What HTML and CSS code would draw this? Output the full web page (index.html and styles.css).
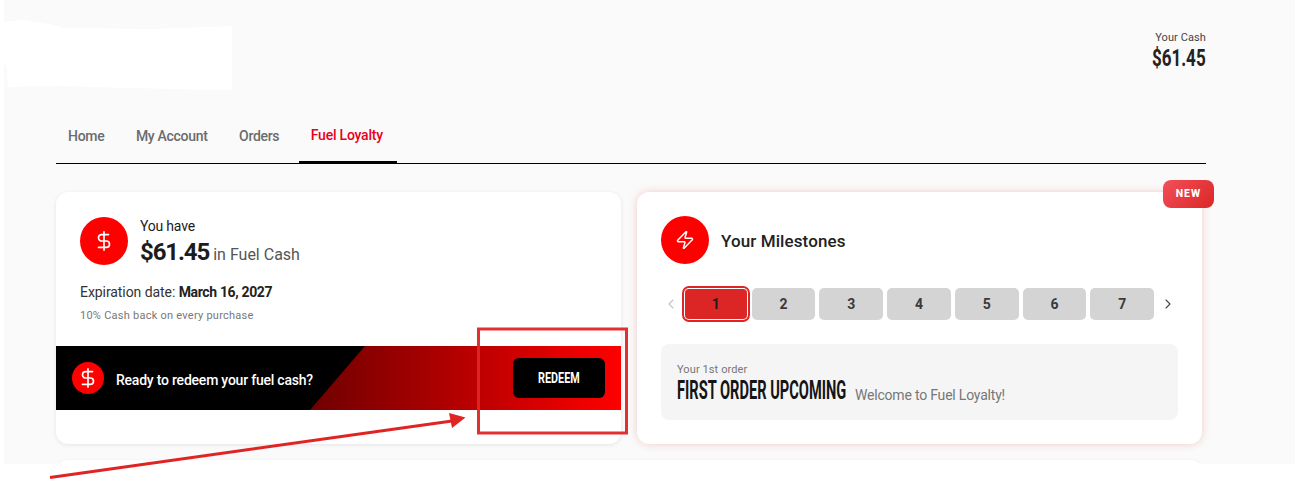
FILE: index.html
```html
<!DOCTYPE html>
<html lang="en">
<head>
<meta charset="utf-8">
<title>Fuel Loyalty</title>
<link rel="stylesheet" href="styles.css">
</head>
<body>
<div class="page">
  <header class="top">
    <svg class="logo-mask" width="228" height="70" viewBox="0 0 228 70"><path fill="#fff" d="M0 2 L20 0 L45 4 L60 8 L150 9 L228 6 L228 50 L229 58 L227 70 L120 68 L60 66 L4 67 L3 50 L0 40 Z"/></svg>
    <div class="cash">
      <div class="cash-label">Your Cash</div>
      <div class="cash-value">$61.45</div>
    </div>
  </header>
  <nav class="tabs">
    <a class="tab">Home</a>
    <a class="tab">My Account</a>
    <a class="tab">Orders</a>
    <a class="tab tab-active">Fuel Loyalty</a>
  </nav>
  <main class="cards">
    <section class="card card-cash">
      <div class="cash-head">
        <span class="circle">
          <svg width="22" height="22" viewBox="0 0 24 24" class="ico"><path d="M12 2v20M17 5H9.500a3.500 3.500 0 0 0 0 7h5a3.500 3.500 0 0 1 0 7H6"/></svg>
        </span>
        <div>
          <div class="you-have">You have</div>
          <div class="balance"><strong>$61.45</strong> in Fuel Cash</div>
        </div>
      </div>
      <p class="expiry">Expiration date: <strong>March 16, 2027</strong></p>
      <p class="back">10% Cash back on every purchase</p>
      <div class="banner">
        <span class="circle circle-sm">
          <svg width="22" height="22" viewBox="0 0 24 24" class="ico"><path d="M12 2v20M17 5H9.500a3.500 3.500 0 0 0 0 7h5a3.500 3.500 0 0 1 0 7H6"/></svg>
        </span>
        <span class="banner-text">Ready to redeem your fuel cash?</span>
        <button class="redeem"><span class="redeem-text">REDEEM</span></button>
      </div>
    </section>
    <section class="card card-miles">
      <span class="badge">NEW</span>
      <div class="miles-head">
        <span class="circle">
          <svg width="20" height="20" viewBox="0 0 24 24" class="ico"><path d="M4 14a1 1 0 0 1-.78-1.630l9.900-10.200a.5.5 0 0 1 .86.46l-1.920 6.020A1 1 0 0 0 13 10h7a1 1 0 0 1 .78 1.630l-9.900 10.200a.5.5 0 0 1-.86-.46l1.920-6.020A1 1 0 0 0 11 14z"/></svg>
        </span>
        <h2 class="miles-title">Your Milestones</h2>
      </div>
      <div class="stepper">
        <svg class="chev chev-off" width="16" height="16" viewBox="0 0 24 24"><path d="M15 18l-6-6 6-6"/></svg>
        <div class="steps">
          <span class="step step-on">1</span>
          <span class="step">2</span>
          <span class="step">3</span>
          <span class="step">4</span>
          <span class="step">5</span>
          <span class="step">6</span>
          <span class="step">7</span>
        </div>
        <svg class="chev" width="16" height="16" viewBox="0 0 24 24"><path d="M9 18l6-6-6-6"/></svg>
      </div>
      <div class="order">
        <div class="order-small">Your 1st order</div>
        <div class="order-line"><span class="order-big">FIRST ORDER UPCOMING</span><span class="order-msg">Welcome to Fuel Loyalty!</span></div>
      </div>
    </section>
  </main>
  <div class="card card-next"></div>
</div>
<svg class="marks" width="1295" height="480" viewBox="0 0 1295 480">
  <rect x="478.500" y="329" width="148" height="104" fill="none" stroke="#e02424" stroke-width="3" opacity=".95"/>
  <path d="M50 477.500 L452 421" fill="none" stroke="#e02424" stroke-width="3"/>
  <path d="M465.500 417.500 L449 413 L452 428 Z" fill="#e02424"/>
</svg>
</body>
</html>
```
FILE: styles.css
```css
* { box-sizing: border-box; }
html, body { margin: 0; padding: 0; background: #fff; }
body {
  font-family: Roboto, "Liberation Sans", sans-serif;
  color: #1c1c1c;
  width: 1295px;
  height: 480px;
  overflow: hidden;
  position: relative;
}
.page {
  margin-left: 4px;
  height: 464px;
  background: #fafafa;
  overflow: hidden;
}
.top {
  display: flex;
  justify-content: space-between;
  align-items: flex-start;
  width: 1202px;
  height: 113px;
  padding-top: 20px;
}
.logo-mask { display: block; }
.cash { text-align: right; padding-top: 11px; }
.cash-label { font-size: 11px; line-height: 14px; color: #444; letter-spacing: .1px; }
.cash-value {
  font-size: 23px;
  line-height: 28px;
  font-weight: 700;
  color: #222;
  transform: scaleX(.74);
  transform-origin: right center;
}
.tabs {
  display: flex;
  gap: 7.5px;
  margin-left: 52px;
  width: 1150px;
  height: 51px;
  border-bottom: 1px solid #000;
}
.tab {
  padding: 0 12px;
  height: 50px;
  line-height: 46px;
  font-size: 14px;
  font-weight: 500;
  color: #6b6b6b;
  letter-spacing: -.3px;
}
.tab-active {
  color: #e8001c;
  border-bottom: 3px solid #000;
  height: 51px;
  width: 98px;
  line-height: 44px;
  letter-spacing: -.22px;
}
.cards {
  display: flex;
  gap: 16px;
  margin: 28px 0 0 52px;
  width: 1146px;
}
.card {
  background: #fff;
  border-radius: 12px;
}
.card-cash {
  width: 565px;
  height: 252px;
  padding-top: 25px;
  box-shadow: 0 1px 4px rgba(0,0,0,.09);
}
.card-miles {
  width: 565px;
  height: 252px;
  padding: 24px 24px 0;
  position: relative;
  box-shadow: 0 0 8px rgba(220,38,38,.22);
}
.card-next {
  margin: 16px 0 0 52px;
  width: 1147px;
  height: 40px;
  box-shadow: 0 0 3px rgba(0,0,0,.05);
}
.circle {
  flex: none;
  width: 48px;
  height: 48px;
  border-radius: 50%;
  background: #f00;
  display: flex;
  align-items: center;
  justify-content: center;
}
.circle-sm { width: 32px; height: 32px; }
.ico { fill: none; stroke: #fff; stroke-width: 1.8; stroke-linecap: round; stroke-linejoin: round; }
.cash-head { display: flex; gap: 12px; padding-left: 24px; }
.you-have { font-size: 14px; line-height: 18px; letter-spacing: -.2px; }
.balance { font-size: 16px; line-height: 34px; color: #555; }
.balance strong { font-size: 24px; color: #1c1c1c; letter-spacing: -1.1px; }
.expiry { margin: 10px 0 0 24px; font-size: 14px; line-height: 20px; color: #333; letter-spacing: -.07px; }
.expiry strong { color: #222; letter-spacing: -.35px; }
.back { margin: 7px 0 0 24px; font-size: 11px; line-height: 14px; color: #777; letter-spacing: .25px; }
.banner {
  position: relative;
  display: flex;
  align-items: center;
  margin-top: 23px;
  height: 64px;
  background: #000;
  padding: 0 16px;
  overflow: hidden;
}
.banner::before {
  content: "";
  position: absolute;
  inset: 0;
  background: linear-gradient(90deg, #700000 45%, #f00 100%);
  clip-path: polygon(254px 100%, 309px 0, 100% 0, 100% 100%);
}
.banner > * { position: relative; }
.banner-text { margin: 3px 0 0 12px; font-size: 14px; font-weight: 500; color: #fff; letter-spacing: -.22px; }
.redeem {
  margin-left: auto;
  width: 92px;
  height: 40px;
  padding: 0;
  border: 0;
  border-radius: 6px;
  background: #000;
  color: #fff;
  font-family: inherit;
  font-size: 15px;
  font-weight: 700;
}
.redeem-text { display: inline-block; transform: scaleX(.72); }
.badge {
  position: absolute;
  top: -12px;
  right: -12px;
  width: 51px;
  height: 28px;
  border-radius: 8px;
  background: linear-gradient(135deg, #f1505a, #dc2626);
  color: #fff;
  font-size: 10.5px;
  font-weight: 800;
  letter-spacing: 1.1px;
  line-height: 28px;
  text-align: center;
}
.miles-head { display: flex; align-items: center; gap: 12px; }
.miles-title { margin: 2px 0 0; font-size: 17px; font-weight: 500; color: #222; letter-spacing: .1px; }
.stepper { display: flex; align-items: center; margin-top: 24px; margin-left: 2px; }
.chev { flex: none; fill: none; stroke: #444; stroke-width: 1.6; stroke-linecap: round; stroke-linejoin: round; }
.chev-off { stroke: #c4c4c4; }
.steps { display: flex; gap: 4px; width: 470px; margin: 0 6px 0 5px; }
.step {
  flex: 1;
  height: 32px;
  border-radius: 5px;
  background: #d4d4d4;
  color: #3a3a3a;
  font-size: 14px;
  font-weight: 700;
  line-height: 32px;
  text-align: center;
}
.step-on {
  background: #dc2626;
  color: #1c1c1c;
  box-shadow: inset 0 0 0 1px #fff, 0 0 0 2px #dc2626;
}
.order {
  margin-top: 24px;
  height: 76px;
  width: 517px;
  border-radius: 8px;
  background: #f5f5f5;
  padding: 18px 16px 0;
}
.order-small { font-size: 11px; line-height: 14px; margin-top: 1px; color: #777; letter-spacing: .1px; }
.order-line { display: flex; align-items: flex-end; gap: 8px; }
.order-big {
  flex: none;
  width: 170px;
  white-space: nowrap;
  font-size: 25px;
  line-height: 28px;
  font-weight: 700;
  color: #151515;
  transform: scaleX(.585);
  transform-origin: left center;
}
.order-msg { font-size: 14px; line-height: 20px; color: #777; letter-spacing: -.2px; }
.marks { position: absolute; left: 0; top: 0; pointer-events: none; }
```
